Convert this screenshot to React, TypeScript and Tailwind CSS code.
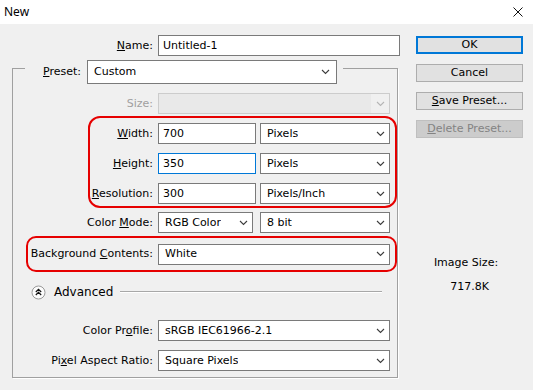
import React from "react";

const font = { fontFamily: '"DejaVu Sans", Tahoma, sans-serif' };

function Chevron({ disabled }: { disabled?: boolean }) {
  return (
    <svg width="9" height="6" viewBox="0 0 9 6" className="shrink-0">
      <path d="M1 1 L4.5 4.5 L8 1" fill="none" stroke={disabled ? "#b5b5b5" : "#3c3c3c"} strokeWidth="1.1" />
    </svg>
  );
}

function Select({ value, className }: { value: string; className: string }) {
  return (
    <div className={`flex h-[21px] items-center justify-between border border-[#7a7a7a] bg-white pl-[6px] pr-[4px] text-black ${className}`}>
      <span className="truncate">{value}</span>
      <Chevron />
    </div>
  );
}

function Field({ value, className, focus }: { value: string; className: string; focus?: boolean }) {
  return (
    <div className={`flex h-[21px] items-center border bg-white pl-[4px] text-black ${focus ? "border-[#0078d7]" : "border-[#7a7a7a]"} ${className}`}>
      {value}
    </div>
  );
}

function Label({ children, className }: { children: React.ReactNode; className: string }) {
  return <div className={`shrink-0 text-right text-black ${className}`}>{children}</div>;
}

function Btn({ children, primary, disabled }: { children: React.ReactNode; primary?: boolean; disabled?: boolean }) {
  return (
    <div
      className={`flex h-[18px] w-[107px] items-center justify-center ${
        primary
          ? "border-2 border-[#0078d7] bg-[#e1e1e1] text-black"
          : disabled
          ? "border border-[#bfbfbf] bg-[#cccccc] text-[#838383]"
          : "border border-[#adadad] bg-[#e1e1e1] text-black"
      }`}
    >
      {children}
    </div>
  );
}

export default function App() {
  return (
    <div className="h-[390px] w-[533px] overflow-hidden bg-[#f0f0f0] text-[11px] leading-[14px]" style={font}>
      <div className="flex h-[24px] items-center justify-between bg-white pl-[4px] pr-[10px]">
        <span className="text-[12px] text-black" style={{ fontFamily: '"Noto Sans", "Segoe UI", sans-serif' }}>New</span>
        <svg width="10" height="10" viewBox="0 0 10 10">
          <path d="M0.5 0.5 L9.5 9.5 M9.5 0.5 L0.5 9.5" stroke="#111" strokeWidth="1" />
        </svg>
      </div>

      <div className="flex">
        <div className="flex w-[405px] flex-col">
          <div className="mt-[11px] flex items-center">
            <Label className="w-[153px]"><u>N</u>ame:</Label>
            <Field value="Untitled-1" className="ml-[5px] h-[20px] w-[242px]" />
          </div>

          <fieldset className="mt-[-4px] ml-[12px] w-[385px] border border-[#a0a0a0] p-0 pb-[6px] shadow-[1px_1px_0_#ffffff]">
            <legend className="ml-[12px] pt-[8px] pr-[6px] pl-[18px]">
              <div className="flex items-center">
                <span className="text-black"><u>P</u>reset:</span>
                <div className="ml-[6px] flex h-[24px] w-[250px] items-center justify-between border border-[#7a7a7a] bg-white pl-[6px] pr-[6px]">
                  <span>Custom</span>
                  <Chevron />
                </div>
              </div>
            </legend>

            <div className="mt-[9px] flex items-center">
              <Label className="w-[140px] !text-[#a0a0a0]">Size:</Label>
              <div className="ml-[5px] flex h-[21px] w-[232px] border border-[#cccccc] bg-[#e9e9e9]">
                <div className="flex-1" />
                <div className="flex w-[18px] items-center justify-center bg-[#f0f0f0]">
                  <Chevron disabled />
                </div>
              </div>
            </div>

            <div className="mt-[2px] ml-[75px] flex w-[309px] flex-col gap-[9px] rounded-[12px] border-2 border-[#e60000] pt-[5px] pb-[2px]">
              <div className="flex items-center">
                <Label className="w-[63px]"><u>W</u>idth:</Label>
                <Field value="700" className="ml-[5px] w-[98px]" />
                <Select value="Pixels" className="ml-[4px] w-[130px]" />
              </div>
              <div className="flex items-center">
                <Label className="w-[63px]"><u>H</u>eight:</Label>
                <Field value="350" className="ml-[5px] w-[98px]" focus />
                <Select value="Pixels" className="ml-[4px] w-[130px]" />
              </div>
              <div className="flex items-center">
                <Label className="w-[63px]"><u>R</u>esolution:</Label>
                <Field value="300" className="ml-[5px] w-[98px]" />
                <Select value="Pixels/Inch" className="ml-[4px] w-[130px]" />
              </div>
            </div>

            <div className="mt-[4px] flex items-center">
              <Label className="w-[140px]">Color <u>M</u>ode:</Label>
              <Select value="RGB Color" className="ml-[5px] w-[95px]" />
              <Select value="8 bit" className="ml-[7px] w-[130px]" />
            </div>

            <div className="mt-[3px] ml-[13px] flex h-[36px] w-[371px] items-center rounded-[10px] border-2 border-[#e60000]">
              <Label className="w-[125px]">Background <u>C</u>ontents:</Label>
              <Select value="White" className="ml-[5px] w-[232px]" />
            </div>

            <div className="mt-[13px] flex h-[14px] items-center">
              <svg width="15" height="15" viewBox="0 0 15 15" className="ml-[18px] shrink-0">
                <circle cx="7.5" cy="7.5" r="6.5" fill="#fbfbfb" stroke="#9a9a9a" />
                <path d="M4.8 7 L7.5 4.4 L10.2 7 M4.8 10 L7.5 7.4 L10.2 10" fill="none" stroke="#111" strokeWidth="1.2" />
              </svg>
              <span className="ml-[8px] text-[12px] text-black">Advanced</span>
              <div className="mr-[15px] ml-[7px] h-[2px] flex-1 border-t border-[#a8a8a8] border-b border-b-white" />
            </div>

            <div className="mt-[21px] flex items-center">
              <Label className="w-[140px]">Color Pr<u>o</u>file:</Label>
              <Select value="sRGB IEC61966-2.1" className="ml-[5px] w-[232px]" />
            </div>
            <div className="mt-[9px] flex items-center">
              <Label className="w-[140px]">Pi<u>x</u>el Aspect Ratio:</Label>
              <Select value="Square Pixels" className="ml-[5px] w-[232px]" />
            </div>
          </fieldset>
        </div>

        <div className="ml-[11px] flex flex-col pt-[12px]">
          <div className="flex flex-col gap-[10px]">
            <Btn primary>OK</Btn>
            <Btn>Cancel</Btn>
            <Btn><span><u>S</u>ave Preset...</span></Btn>
            <Btn disabled><span><u>D</u>elete Preset...</span></Btn>
          </div>
          <div className="mt-[118px] pr-[7px] text-center text-black">Image Size:</div>
          <div className="mt-[10px] text-center text-black">717.8K</div>
        </div>
      </div>
    </div>
  );
}
